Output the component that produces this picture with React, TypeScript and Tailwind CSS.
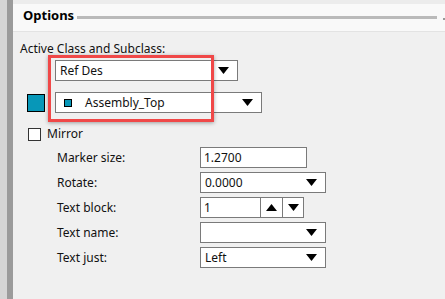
import React from 'react';

const font = { fontFamily: '"Noto Sans", "Open Sans", Arial, sans-serif' };

const Arrow: React.FC<{ up?: boolean }> = ({ up }) => (
  <svg width="11" height="7" viewBox="0 0 11 7" className="block">
    {up ? <polygon points="0,7 11,7 5.5,0" fill="#000" /> : <polygon points="0,0 11,0 5.5,7" fill="#000" />}
  </svg>
);

const Combo: React.FC<{ value?: string; width: string; children?: React.ReactNode }> = ({ value, width, children }) => (
  <div className={`flex h-[21px] ${width} items-center border border-[#7a7a7a] bg-white pl-[4px] pr-[8px]`}>
    <div className="flex flex-1 items-center text-[12px] text-[#111]">{children ?? value}</div>
    <Arrow />
  </div>
);

const Row: React.FC<{ label: string; children: React.ReactNode }> = ({ label, children }) => (
  <div className="flex h-[21px] items-center">
    <div className="w-[180px] pl-[37px] text-[12px] text-[#111]">{label}</div>
    {children}
  </div>
);

export default function App() {
  return (
    <div className="flex h-[299px] w-[445px] overflow-hidden bg-[#f0f0f0]" style={font}>
      <div className="w-[7px] bg-[#d5d5d5]" />
      <div className="w-[6px] bg-[#9b9b9b]" />
      <div className="relative flex flex-1 flex-col">
        <div className="h-[4px] bg-[#ececec]" />
        <div className="flex h-[28px] items-center border-b border-[#e3e3e3] bg-[#f9f9f9] pb-[3px]">
          <span className="pl-[10px] text-[13px] font-bold text-[#000]">Options</span>
          <div className="ml-[3px] mr-[6px] mt-[3px] h-[3px] flex-1 bg-[#bababa]" />
          <div className="mt-[6px] h-[2px] w-[2px] bg-[#999]" />
        </div>

        <div className="flex flex-col pl-[7px] pt-[9px]">
          <div className="h-[16px] text-[12px] leading-[16px] text-[#111]">Active Class and Subclass:</div>
          <div className="ml-[35px] mt-[3px]">
            <Combo value="Ref Des" width="w-[183px]" />
          </div>
          <div className="mt-[11px] flex items-center">
            <div className="ml-[7px] h-[18px] w-[18px] border border-black bg-[#0797b8]" />
            <div className="ml-[10px]">
              <Combo width="w-[207px]">
                <span className="ml-[4px] mr-[13px] h-[8px] w-[8px] border border-black bg-[#0797b8]" />
                Assembly_Top
              </Combo>
            </div>
          </div>
          <div className="mt-[12px] flex items-center">
            <div className="ml-[8px] h-[13px] w-[13px] border border-[#333] bg-white" />
            <span className="ml-[6px] text-[12px] text-[#111]">Mirror</span>
          </div>
          <div className="mt-[4px] flex flex-col gap-[4px]">
            <Row label="Marker size:">
              <div className="flex h-[21px] w-[107px] items-center border border-[#7a7a7a] bg-white pl-[3px] text-[12px] text-[#111]">1.2700</div>
            </Row>
            <Row label="Rotate:">
              <Combo value="0.0000" width="w-[126px]" />
            </Row>
            <Row label="Text block:">
              <div className="flex h-[21px] w-[104px] border border-[#7a7a7a] bg-white">
                <div className="flex flex-1 items-center pl-[3px] text-[12px] text-[#111]">1</div>
                <div className="flex w-[22px] items-center justify-center border-l border-[#7a7a7a]"><Arrow up /></div>
                <div className="flex w-[21px] items-center justify-center border-l border-[#7a7a7a]"><Arrow /></div>
              </div>
            </Row>
            <Row label="Text name:">
              <Combo value="" width="w-[126px]" />
            </Row>
            <Row label="Text just:">
              <Combo value="Left" width="w-[126px]" />
            </Row>
          </div>
        </div>

        <div className="pointer-events-none absolute left-[35px] top-[55px] h-[67px] w-[166px] border-[3px] border-[#f04848] shadow-[0_1px_4px_rgba(0,0,0,0.35)]" />
      </div>
    </div>
  );
}
